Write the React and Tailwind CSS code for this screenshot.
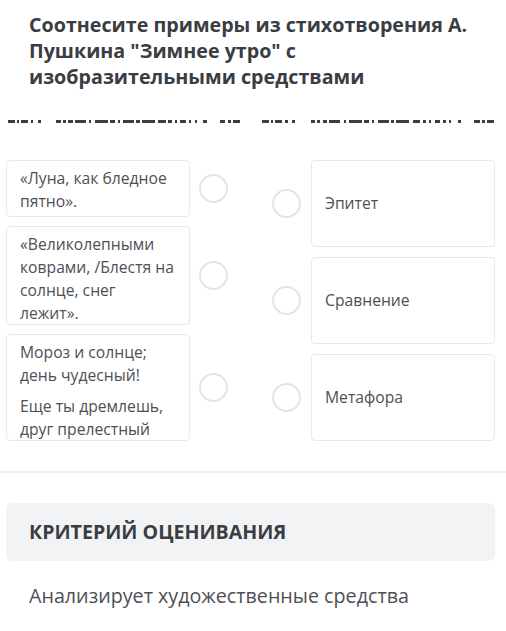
import React from "react";

//! Dash pattern of the garbled line under the title: [dash, gap]
const dashes = [
  [6, 2], [2, 2], [6, 3], [2, 4], [3, 14], [4, 2], [3, 2], [4, 2], [10, 3], [2, 3],
  [12, 2], [4, 3], [2, 3], [10, 2], [3, 2], [12, 3], [7, 2], [3, 3], [2, 3], [5, 3],
  [2, 3], [2, 6], [3, 12], [5, 2], [3, 2], [6, 0],
];

const DashRow = () => (
  <div className="flex items-center h-[3px]">
    {dashes.map(([w, g], i) => (
      <span
        key={i}
        className="h-[3px] bg-[#3a3d42] shrink-0"
        style={{ width: w * 1.1, marginRight: g * 1.1 }}
      />
    ))}
  </div>
);

const Circle = () => (
  <span className="w-[29px] h-[29px] rounded-full border-2 border-[#e3e4e6] bg-white shrink-0" />
);

const leftItems = [
  { h: "h-[57px]", lines: [["«Луна, как бледное", "пятно»."]] },
  {
    h: "h-[99px]",
    lines: [["«Великолепными", "коврами, /Блестя на", "солнце, снег", "лежит»."]],
  },
  {
    h: "h-[107px]",
    lines: [
      ["Мороз и солнце;", "день чудесный!"],
      ["Еще ты дремлешь,", "друг прелестный"],
    ],
  },
];

const rightItems = ["Эпитет", "Сравнение", "Метафора"];

export default function App() {
  return (
    <div
      className="w-[506px] h-[631px] bg-white overflow-hidden text-[#4a4d52]"
      style={{ fontFamily: '"Open Sans", "Liberation Sans", sans-serif' }}
    >
      {/* title */}
      <h1 className="px-[29px] pt-[12px] text-[19.7px] leading-[26px] font-bold text-[#3a3d42]">
        Соотнесите примеры из стихотворения А. Пушкина "Зимнее утро" с изобразительными средствами
      </h1>

      {/* garbled line */}
      <div className="flex justify-between pl-[8px] pr-[12px] mt-[30px]">
        <DashRow />
        <DashRow />
      </div>

      {/* matching columns */}
      <div className="flex justify-between pl-[6px] pr-[11px] mt-[37px]">
        <div className="flex flex-col gap-[9px]">
          {leftItems.map((it, i) => (
            <div key={i} className="flex items-center gap-[9px]">
              <div
                className={`w-[184px] ${it.h} rounded-[4px] border border-[#e8e9eb] bg-white px-[13px] pt-[6px] flex flex-col gap-[8px] text-[15.7px] leading-[23px] text-[#4d5055]`}
              >
                {it.lines.map((p, j) => (
                  <p key={j}>
                    {p.map((l, k) => (
                      <span key={k} className="block whitespace-nowrap">
                        {l}
                      </span>
                    ))}
                  </p>
                ))}
              </div>
              <Circle />
            </div>
          ))}
        </div>

        <div className="flex flex-col gap-[10px]">
          {rightItems.map((t) => (
            <div key={t} className="flex items-center gap-[10px]">
              <Circle />
              <div className="w-[184px] h-[87px] rounded-[4px] border border-[#e8e9eb] bg-white px-[13px] flex items-center text-[15.7px] text-[#4d5055]">
                {t}
              </div>
            </div>
          ))}
        </div>
      </div>

      {/* divider */}
      <div className="mt-[30px] border-t-2 border-[#eceef0]" />

      {/* criteria */}
      <div className="ml-[6px] mr-[11px] mt-[30px] h-[58px] rounded-[6px] bg-[#f1f3f5] px-[23px] flex items-center">
        <span className="text-[19.6px] font-bold text-[#3a3d42]">КРИТЕРИЙ ОЦЕНИВАНИЯ</span>
      </div>

      <p className="px-[29px] mt-[20px] text-[19.7px] text-[#4d5055]">
        Анализирует художественные средства
      </p>
    </div>
  );
}
